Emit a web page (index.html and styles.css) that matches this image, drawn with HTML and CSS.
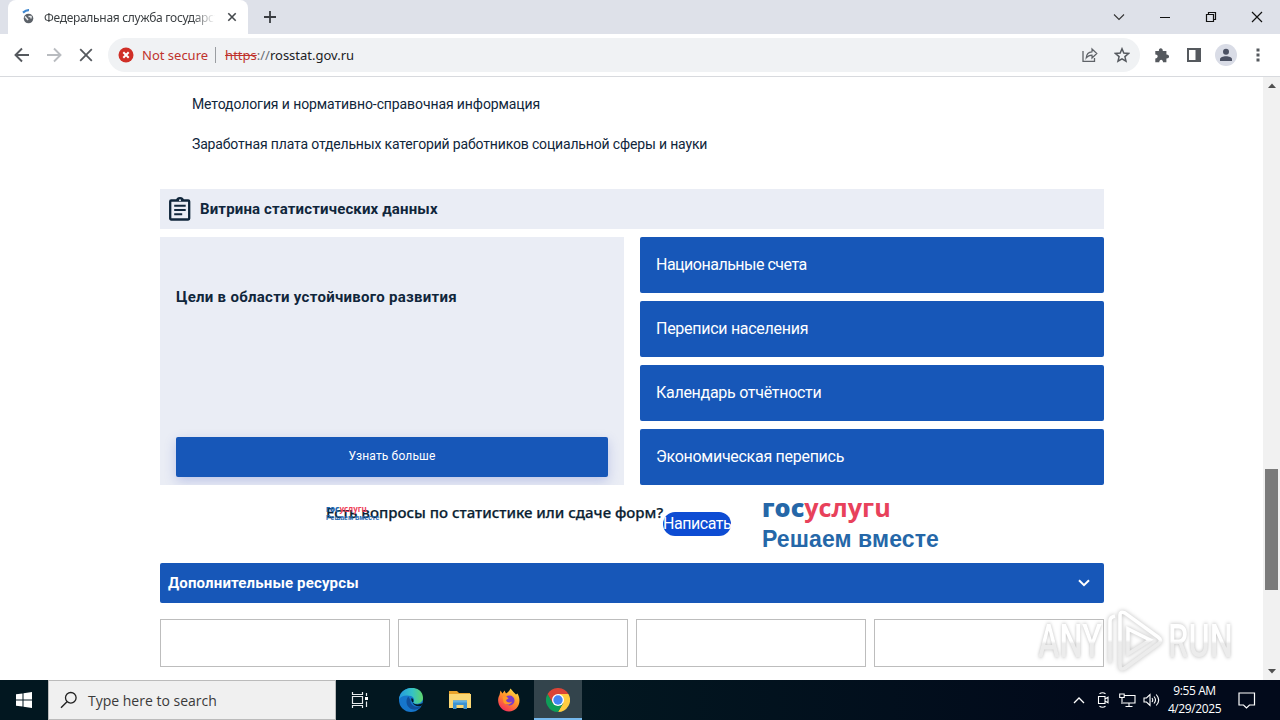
FILE: index.html
```html
<!DOCTYPE html>
<html lang="ru">
<head>
  <meta charset="UTF-8">
  <meta name="viewport" content="width=device-width, initial-scale=1.0">
  <title>Федеральная служба государственной статистики</title>
  <link rel="stylesheet" href="styles.css">
</head>
<body>
  <header class="titlebar">
    <div class="tab">
      <svg class="favicon" width="14" height="16" viewBox="0 0 14 16">
        <path d="M2 3.600Q5 1 8 1.200" fill="none" stroke="#3f87cf" stroke-width="2.200"/>
        <circle cx="7.500" cy="9.500" r="4.800" fill="#5c6269"/>
        <path d="M4 7.500l3 3.500M7.500 7.500h2.500v2" stroke="#e8eaec" stroke-width="1.500" fill="none"/>
      </svg>
      <span class="tab-title">Федеральная служба государственной</span>
      <svg class="tab-close" width="10" height="10" viewBox="0 0 10 10"><path d="M1.300 1.300l7.400 7.400M8.700 1.300L1.300 8.700" stroke="#45494d" stroke-width="1.600"/></svg>
    </div>
    <svg class="new-tab" width="12" height="12" viewBox="0 0 12 12"><path d="M6 0v12M0 6h12" stroke="#3a3d42" stroke-width="1.800"/></svg>
    <div class="window-buttons">
      <svg width="46" height="28" viewBox="0 0 46 28"><path d="M18 11.500l5 5 5-5" fill="none" stroke="#333" stroke-width="1.100"/></svg>
      <svg width="46" height="28" viewBox="0 0 46 28"><path d="M18 14.500h10" stroke="#111"/></svg>
      <svg width="46" height="28" viewBox="0 0 46 28"><path d="M18.500 11.500h7v7h-7zM20.500 11.500v-2h7v7h-2" fill="none" stroke="#111" stroke-width="1.200"/></svg>
      <svg width="46" height="28" viewBox="0 0 46 28"><path d="M18 9l10 10M28 9L18 19" stroke="#111" stroke-width="1.200"/></svg>
    </div>
  </header>

  <div class="toolbar">
    <svg width="32" height="32" viewBox="0 0 32 32"><path d="M23 16H10M16 9.500L9.500 16l6.500 6.500" fill="none" stroke="#55595e" stroke-width="1.900"/></svg>
    <svg width="32" height="32" viewBox="0 0 32 32"><path d="M9 16h13M16 9.500l6.500 6.500-6.500 6.500" fill="none" stroke="#b9bcc0" stroke-width="1.900"/></svg>
    <svg width="32" height="32" viewBox="0 0 32 32"><path d="M10.200 10.200l11.600 11.600M21.800 10.200L10.200 21.800" stroke="#55595e" stroke-width="1.800"/></svg>
    <div class="address-bar">
      <svg width="16" height="16" viewBox="0 0 16 16"><circle cx="8" cy="8" r="7.500" fill="#d02f27"/><path d="M5.300 5.300l5.400 5.400M10.700 5.300l-5.400 5.400" stroke="#fff" stroke-width="2"/></svg>
      <span class="not-secure">Not secure</span>
      <span class="divider"></span>
      <span class="url"><s>https</s><i>://</i>rosstat.gov.ru</span>
      <div class="address-icons">
        <svg width="16" height="16" viewBox="0 0 16 16"><path d="M1 4v10.300h11.500V11" fill="none" stroke="#5f6368" stroke-width="1.300"/><path d="M4.200 11c.3-4 2.500-6 5.800-6.200V2l4.800 4.500L10 11V8.200C7.500 8.200 5.800 9 4.200 11z" fill="none" stroke="#5f6368" stroke-width="1.200"/></svg>
        <svg width="16" height="16" viewBox="0 0 16 16"><path d="M8 1.800l1.800 4.300 4.700.4-3.600 3.100 1.100 4.600L8 11.800l-4 2.400 1.100-4.600-3.600-3.100 4.700-.4z" fill="none" stroke="#55595e" stroke-width="1.500"/></svg>
      </div>
    </div>
    <svg class="ext" width="16" height="16" viewBox="0 0 16 16"><path d="M1.300 4h3.600c-.5-3.800 4.200-3.800 3.900 0h3.600v3.500c3.600-.2 3.600 4.200 0 4v3.700H9c.2-3.400-3.900-3.400-3.700 0H1.300v-3.800c3.200.1 3.200-4 0-3.800z" fill="#55595e"/></svg>
    <svg class="panel" width="14" height="14" viewBox="0 0 14 14"><path d="M0 0h14v14H0zM2 2v10h6.500V2z" fill="#55595e" fill-rule="evenodd"/></svg>
    <svg class="profile" width="22" height="22" viewBox="0 0 22 22"><circle cx="11" cy="11" r="11" fill="#d9dce6"/><circle cx="11" cy="7.700" r="3" fill="#4b5163"/><path d="M5 17v-1.800c0-4 12-4 12 0V17z" fill="#4b5163"/></svg>
    <svg class="dots" width="4" height="14" viewBox="0 0 4 14"><path d="M.5.500h3v3h-3zM.5 5.500h3v3h-3zM.5 10.500h3v3h-3z" fill="#55595e"/></svg>
  </div>

  <div class="viewport">
    <main class="page">
      <ul class="links">
        <li class="link-1">Методология и нормативно-справочная информация</li>
        <li class="link-2">Заработная плата отдельных категорий работников социальной сферы и науки</li>
      </ul>

      <h2 class="section-title">
        <svg width="24" height="26" viewBox="0 0 24 26"><rect x="2.200" y="4.500" width="19" height="19" rx="1" fill="none" stroke="#10263b" stroke-width="2.300"/><path d="M8 5a4 4 0 0 1 8 0z" fill="#10263b"/><circle cx="12" cy="4.200" r="1" fill="#eaedf5"/><path d="M6.200 9.700h11.500M6.200 14h11.500M6.200 18.300h8" stroke="#10263b" stroke-width="2.100"/></svg>
        <span>Витрина статистических данных</span>
      </h2>

      <section class="showcase">
        <div class="goal-card">
          <h3>Цели в области устойчивого развития</h3>
          <a class="more">Узнать больше</a>
        </div>
        <div class="tiles">
          <a class="tile tile-1"><span>Национальные счета</span></a>
          <a class="tile"><span>Переписи населения</span></a>
          <a class="tile"><span>Календарь отчётности</span></a>
          <a class="tile"><span>Экономическая перепись</span></a>
        </div>
      </section>

      <section class="feedback">
        <div class="question">
          <div class="mini-logo"><div><b>гос</b><em>услугu</em></div><div class="mini-slogan">Решаем вместе</div></div>
          <span>Есть вопросы по статистике или сдаче форм?</span>
        </div>
        <a class="write"><span>Написать</span></a>
        <div class="gos-logo">
          <div class="gos-name"><b>гос</b><em>услугu</em></div>
          <div class="gos-slogan">Решаем вместе</div>
        </div>
      </section>

      <div class="resources">
        <span>Дополнительные ресурсы</span>
        <svg width="14" height="10" viewBox="0 0 14 10"><path d="M2 2.200l5 5 5-5" fill="none" stroke="#fff" stroke-width="2"/></svg>
      </div>
      <div class="boxes">
        <div></div><div></div><div></div><div></div>
      </div>
    </main>

    <div class="scrollbar">
      <svg width="8" height="5" viewBox="0 0 8 5"><path d="M0 5l4-4.500L8 5z" fill="#505050"/></svg>
      <div class="thumb"></div>
      <svg width="8" height="5" viewBox="0 0 8 5"><path d="M0 0l4 4.500L8 0z" fill="#505050"/></svg>
    </div>

    <div class="watermark">
      <span>ANY</span>
      <svg width="60" height="66" viewBox="0 0 60 66">
        <defs><linearGradient id="mark" gradientUnits="userSpaceOnUse" x1="0" y1="0" x2="0" y2="66"><stop offset=".48" stop-color="#fff"/><stop offset=".52" stop-color="#ececec"/></linearGradient></defs>
        <path d="M6 55V13q0-4 5-5M16 57V7q0-4 5-2l33 24q5 4 0 7L21 60q-5 3-5-3M24 21v25l22-14z" fill="none" stroke="url(#mark)" stroke-width="3.600"/>
      </svg>
      <span class="run">RUN</span>
    </div>
  </div>

  <footer class="taskbar">
    <div class="start"><svg width="16" height="16" viewBox="0 0 16 16"><path d="M0 2.300l6.500-.9v6.100H0zM7.500 1.200L16 0v7.500H7.500zM0 8.500h6.500v6.100L0 13.700zM7.500 8.500H16V16l-8.500-1.200z" fill="#fff"/></svg></div>
    <div class="search">
      <svg width="18" height="18" viewBox="0 0 18 18"><circle cx="10.800" cy="6.800" r="5.300" fill="none" stroke="#222" stroke-width="1.300"/><path d="M7 10.700L1 16.700" stroke="#222" stroke-width="1.400"/></svg>
      <span>Type here to search</span>
    </div>
    <div class="app"><svg width="18" height="16" viewBox="0 0 18 16"><path d="M1.500 0v2.500h10V0M1.500 16v-2.500h10V16M1.500 4.500h10v7h-10zM15.500 1v3M15.500 9.500V15" fill="none" stroke="#e6eaec" stroke-width="1.200"/><path d="M14 5h3v3h-3z" fill="#fff"/></svg></div>
    <div class="app edge">
      <svg width="24" height="24" viewBox="0 0 24 24">
        <defs><linearGradient id="edge" x1="0" y1="0" x2="1" y2="0"><stop offset="0" stop-color="#2498de"/><stop offset=".55" stop-color="#35c2c6"/><stop offset="1" stop-color="#5fd66a"/></linearGradient></defs>
        <circle cx="12" cy="12" r="12" fill="#1676cc"/>
        <path d="M0 11.500C1-3.500 24-4 24 10c0 6-8.500 7-9.700 4.500 1.500-2 1-5.500-2.300-6.500C7 6.500 1.500 8 0 11.500z" fill="url(#edge)"/>
        <path d="M9.300 8.500C6 12 7 20 14 21.500c3.500.6 6.500-.8 8.200-3.200C17 20.500 11 17 11.500 12z" fill="#10509c"/>
        <path d="M14 14.500c-1.500-1-2-2.300-1.500-4.500 2 .5 2.500 2.800 1.500 4.500z" fill="#021720"/>
        <path d="M13.500 14.500q4 3.500 10.500.5l-1.500 2.700q-6 2-9-3.200z" fill="#021720"/>
      </svg>
    </div>
    <div class="app explorer">
      <svg width="22" height="20" viewBox="0 0 22 20"><path d="M0 1h8l2 2h11v4H0z" fill="#e9a32b"/><path d="M0 4h22v14H0z" fill="#fbd774"/><path d="M4 10.500h14V19h-3.500v-4h-7v4H4z" fill="#3d93d1"/><path d="M4 10.500h14v2H4z" fill="#62b1e4"/></svg>
    </div>
    <div class="app firefox">
      <svg width="24" height="24" viewBox="0 0 24 24">
        <defs><linearGradient id="fox" x1=".8" y1="0" x2=".2" y2="1"><stop offset="0" stop-color="#ffe348"/><stop offset=".45" stop-color="#ff9429"/><stop offset="1" stop-color="#f5245f"/></linearGradient></defs>
        <path d="M3.500 2.500l2 3 2-3 1.500 3q3-1.500 4.500-5l3 3.500 2.500 2.500 1.500-1C25.500 14 20.500 23.500 12 23.500S-1.500 14 2.500 7z" fill="url(#fox)"/>
        <circle cx="12.500" cy="12.500" r="5" fill="#7a3bc9"/>
        <path d="M5.500 8.500c3-.5 4.500.5 6 2l-2.500 1.500c1 3 4 3 6 1.500-1 3.500-6.500 4-8.500 1z" fill="#ff9a26"/>
      </svg>
    </div>
    <div class="app active">
      <svg width="24" height="24" viewBox="0 0 24 24"><path d="M12 12V6h10.400A12 12 0 0 1 12 24l5.200-9z" fill="#ffcd40"/><path d="M12 12l5.200 3L12 24A12 12 0 0 1 1.600 6l5.200 9z" fill="#0f9d58"/><path d="M12 6h10.400A12 12 0 0 0 1.600 6l5.200 9z" fill="#db4437"/><circle cx="12" cy="12" r="6" fill="#fff"/><circle cx="12" cy="12" r="4.700" fill="#4285f4"/></svg>
    </div>
    <div class="tray">
      <div class="tray-icon"><svg width="12" height="8" viewBox="0 0 12 8"><path d="M1 7l5-5 5 5" fill="none" stroke="#fff" stroke-width="1.300"/></svg></div>
      <div class="tray-icon"><svg width="12" height="16" viewBox="0 0 12 16"><path d="M2.500 1.800q3-2 6 0M2.500 14.200q3 2 6 0M1.500 4.500h6.500v7H1.500zM8 7l3-1.700v5.400L8 9" fill="none" stroke="#fff" stroke-width="1.100"/></svg></div>
      <div class="tray-icon"><svg width="17" height="16" viewBox="0 0 17 16"><path d="M5 3.500h11v7.500H4M10 11v3M6.500 14.500h7M.7 2h4.500v3.500H.7zM3 5.500V12" fill="none" stroke="#fff" stroke-width="1.100"/></svg></div>
      <div class="tray-icon"><svg width="17" height="14" viewBox="0 0 17 14"><path d="M1 5h2.500L7 1.500v11L3.500 9H1z" fill="none" stroke="#fff" stroke-width="1.100"/><path d="M9 5q1.500 2 0 4M11 3.500q3 3.500 0 7M13.200 1.500q5 5.500 0 11" fill="none" stroke="#fff" stroke-width="1.100"/></svg></div>
      <div class="clock"><div>9:55 AM</div><div>4/29/2025</div></div>
      <svg width="18" height="17" viewBox="0 0 18 17"><path d="M1 1h15.500v12h-5L8.500 16l-3-3H1z" fill="none" stroke="#fff" stroke-width="1.200"/></svg>
    </div>
  </footer>
</body>
</html>
```
FILE: styles.css
```css
* {
  box-sizing: border-box;
}

body {
  margin: 0;
  width: 1280px;
  height: 720px;
  overflow: hidden;
  display: flex;
  flex-direction: column;
  font-family: Roboto, 'Liberation Sans', sans-serif;
  background: #fff;
  color: #10263b;
}

svg {
  display: block;
  flex: none;
}

span {
  white-space: nowrap;
}

/* Browser window */
.titlebar {
  height: 34px;
  background: #dee1e9;
  display: flex;
  align-items: center;
  padding-left: 8px;
}

.tab {
  width: 240px;
  height: 34px;
  background: #fff;
  border-radius: 8px 8px 0 0;
  display: flex;
  align-items: center;
  padding-left: 13px;
}

.tab-title {
  width: 171px;
  margin-left: 9px;
  overflow: hidden;
  font: 12px 'Noto Sans', sans-serif;
  letter-spacing: -0.3px;
  color: #3c4043;
  -webkit-mask-image: linear-gradient(90deg, #000 148px, transparent 171px);
  mask-image: linear-gradient(90deg, #000 148px, transparent 171px);
}

.tab-close {
  margin-left: 12px;
}

.new-tab {
  margin-left: 16px;
}

.window-buttons {
  display: flex;
  margin-left: auto;
}

.toolbar {
  height: 43px;
  display: flex;
  align-items: center;
  padding-left: 6px;
  border-bottom: 1px solid #d8dade;
}

.address-bar {
  width: 1032px;
  height: 34px;
  margin-left: 6px;
  padding: 0 10px;
  border-radius: 17px;
  background: #f0f2f4;
  display: flex;
  align-items: center;
  font: 13px 'Noto Sans', sans-serif;
}

.not-secure {
  margin-left: 8px;
  color: #bf322c;
}

.divider {
  width: 1px;
  height: 16px;
  margin: 0 9px 0 7px;
  background: #9a9da1;
}

.url {
  color: #202124;
}

.url s {
  color: #bf322c;
}

.url i {
  font-style: normal;
  color: #6b6f74;
}

.address-icons {
  display: flex;
  gap: 16px;
  margin-left: auto;
}

.ext {
  margin-left: 14px;
}

.panel {
  margin-left: 17px;
}

.profile {
  margin-left: 14px;
}

.dots {
  margin-left: 19px;
}

/* Site */
.viewport {
  position: relative;
  height: 603px;
  display: flex;
  justify-content: space-between;
  overflow: hidden;
}

.page {
  width: 944px;
  margin-left: 160px;
  padding-top: 7px;
}

.links {
  list-style: none;
  margin: 0 0 25px;
  padding: 0 0 0 32px;
  font-size: 14px;
  line-height: 40px;
}

.link-1 {
  letter-spacing: -0.1px;
}

.link-2 {
  letter-spacing: -0.16px;
}

.section-title {
  height: 40px;
  margin: 0 0 8px;
  padding-left: 8px;
  background: #eaedf5;
  display: flex;
  align-items: center;
  gap: 8px;
  font-size: 15px;
  font-weight: 700;
  letter-spacing: 0.15px;
}

.showcase {
  display: grid;
  grid-template-columns: 1fr 1fr;
  gap: 16px;
}

.goal-card {
  height: 248px;
  padding: 48px 16px 8px;
  background: #eaedf5;
  display: flex;
  flex-direction: column;
  justify-content: space-between;
  overflow: hidden;
}

.goal-card h3 {
  margin: 0;
  font-size: 15px;
  line-height: 24px;
  letter-spacing: 0.28px;
}

.more {
  height: 40px;
  border-radius: 2px;
  background: #1757b8;
  color: #fff;
  font-size: 12px;
  letter-spacing: 0.15px;
  line-height: 38px;
  text-align: center;
  box-shadow: 0 4px 12px rgba(60, 80, 190, 0.25);
}

.tiles {
  display: flex;
  flex-direction: column;
  gap: 8px;
}

.tile {
  height: 56px;
  padding-left: 16px;
  border-radius: 2px;
  background: #1757b8;
  color: #fff;
  font-size: 16px;
  letter-spacing: -0.28px;
  line-height: 56px;
}

.tile-1 {
  letter-spacing: -0.5px;
}

.feedback {
  height: 78px;
  padding-left: 166px;
  display: flex;
  align-items: flex-start;
}

.question {
  position: relative;
  width: 337px;
  padding-top: 15px;
  font: 500 15px/24px 'Noto Sans', sans-serif;
  color: #0b1f33;
}

.question span {
  -webkit-text-stroke: 0.25px #0b1f33;
}

.mini-logo {
  position: absolute;
  left: 0;
  top: 20px;
  font: 700 8px/8px 'Open Sans', sans-serif;
  color: #1f67b0;
}

.mini-logo em {
  font-style: normal;
  color: #ee3f58;
}

.mini-slogan {
  font: 700 7px/10px 'Liberation Sans', sans-serif;
  white-space: nowrap;
}

.write {
  width: 68px;
  height: 24px;
  margin-top: 27px;
  border-radius: 12px;
  background: #0d4cd3;
  color: #fff;
  font-size: 16px;
  letter-spacing: -0.45px;
  line-height: 24px;
}

.gos-logo {
  margin-left: 31px;
  padding-top: 5px;
  color: #2567a8;
}

.gos-name {
  font: 700 25.2px/34px 'Open Sans', sans-serif;
  white-space: nowrap;
}

.gos-name em {
  font-style: normal;
  color: #e8415b;
}

.gos-slogan {
  font: 700 23px/30px 'Liberation Sans', sans-serif;
  letter-spacing: 0.1px;
  white-space: nowrap;
}

.resources {
  height: 40px;
  padding: 0 13px 0 8px;
  border-radius: 2px;
  background: #1757b8;
  color: #fff;
  display: flex;
  align-items: center;
  justify-content: space-between;
  font-size: 15px;
  font-weight: 700;
  letter-spacing: 0.15px;
}

.boxes {
  display: grid;
  grid-template-columns: repeat(4, 1fr);
  gap: 8px;
  margin-top: 16px;
}

.boxes div {
  height: 48px;
  border: 1px solid #bdbdbd;
}

.scrollbar {
  width: 17px;
  padding-top: 6px;
  background: #f1f1f1;
  display: flex;
  flex-direction: column;
  align-items: center;
}

.thumb {
  width: 13px;
  height: 121px;
  margin: 381px 0 79px;
  background: #7b7b7b;
}

.watermark {
  position: absolute;
  left: 1038px;
  top: 531px;
  width: 196px;
  height: 66px;
  display: flex;
  align-items: center;
  font: 500 47px/66px Roboto, sans-serif;
}

/* wider than the squeezed word, so its clipped background covers it all */
.watermark span {
  width: 98px;
  margin-right: -32px;
  transform: scaleX(0.69);
  transform-origin: left;
  background: linear-gradient(#fff 50%, #ececec 54%);
  -webkit-background-clip: text;
  background-clip: text;
  color: transparent;
  filter: drop-shadow(0 0 2px #bbb);
}

.watermark svg {
  filter: drop-shadow(0 0 2px #bbb);
}

.watermark .run {
  margin-left: 4px;
}

/* Windows taskbar */
.taskbar {
  height: 40px;
  background: linear-gradient(90deg, #021720 45%, #020a1b 85%);
  display: flex;
  align-items: center;
}

.start {
  width: 48px;
  display: flex;
  justify-content: center;
}

.search {
  width: 288px;
  height: 40px;
  padding-left: 11px;
  border: 1px solid #bbb;
  background: #f0f0f0;
  display: flex;
  align-items: center;
  gap: 10px;
  font: 14px 'Open Sans', sans-serif;
  color: #3a3a3a;
}

.app {
  width: 48px;
  height: 40px;
  display: flex;
  align-items: center;
  justify-content: center;
}

.app.edge {
  width: 53px;
}

.app.explorer {
  width: 46px;
}

.app.firefox {
  width: 51px;
}

.app.active {
  background: #33444c;
  box-shadow: inset 0 -2px #76b9ed;
}

.tray {
  margin-left: auto;
  padding-right: 24px;
  display: flex;
  align-items: center;
  color: #fff;
}

.tray-icon {
  width: 24px;
  display: flex;
  justify-content: center;
}

.clock {
  width: 63px;
  margin-right: 12px;
  font: 12px/18px 'Open Sans', sans-serif;
  letter-spacing: -0.4px;
  text-align: center;
}
```
